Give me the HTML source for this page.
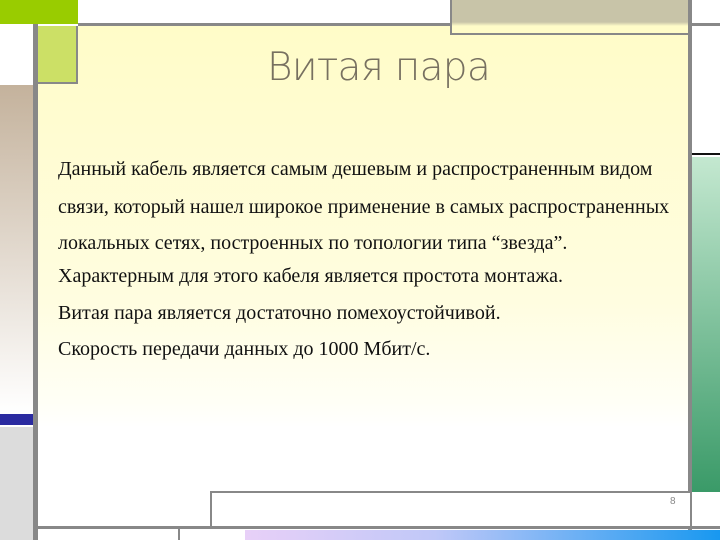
<!DOCTYPE html>
<html><head><meta charset="utf-8"><style>
body{margin:0;width:720px;height:540px;position:relative;overflow:hidden;background:#fff;font-family:"Liberation Serif",serif}
div{position:absolute;box-sizing:border-box}
.t{font-size:20px;color:#111;left:58px;white-space:nowrap}
</style></head><body>
<div style="left:0;top:0;width:78px;height:24px;background:#99cc00"></div>
<div style="left:78px;top:23px;width:642px;height:3px;background:#888"></div>
<div style="left:0;top:27px;width:33px;height:56px;background:#fff"></div>
<div style="left:0;top:85px;width:33px;height:328px;background:linear-gradient(#c4b29c,#fff)"></div>
<div style="left:0;top:414px;width:33px;height:11px;background:#2a2aa0"></div>
<div style="left:0;top:427px;width:33px;height:113px;background:#dcdcdc"></div>
<div style="left:33px;top:24px;width:5px;height:516px;background:#888"></div>
<div style="left:38px;top:26px;width:652px;height:502px;background:linear-gradient(#fffcc8 0%,#fffde0 55%,#fffff6 75%,#fff 80%)"></div>
<div style="left:38px;top:26px;width:40px;height:58px;background:#cce066;border-right:2px solid #888;border-bottom:2px solid #888"></div>
<div style="left:450px;top:0;width:240px;height:35px;background:linear-gradient(#c8c4a8 0,#c8c4a8 22px,#fffcc8 26px);border:2px solid #888;border-top:none"></div>
<div style="left:688px;top:0;width:4px;height:540px;background:#888"></div>
<div style="left:692px;top:27px;width:28px;height:128px;background:#fff;border-bottom:2px solid #111"></div>
<div style="left:692px;top:157px;width:28px;height:335px;background:linear-gradient(#c4e8d0,#3a9a68)"></div>
<div style="left:210px;top:491px;width:480px;height:37px;border:2px solid #888;border-right:none;background:#fff"></div>
<div style="left:670px;top:496px;font-size:10px;color:#888;font-family:'Liberation Sans',sans-serif">8</div>
<div style="left:38px;top:526px;width:682px;height:3px;background:#888"></div>
<div style="left:178px;top:529px;width:2px;height:11px;background:#888"></div>
<div style="left:245px;top:530px;width:475px;height:10px;background:linear-gradient(90deg,#e8d0f8,#c0c8f8 40%,#1898f0)"></div>
<div style="left:267px;top:45px;font-size:39px;color:#777060;font-family:'DejaVu Sans','Liberation Sans',sans-serif;font-weight:200;letter-spacing:-0.7px">Витая пара</div>
<div class="t" style="top:158px">Данный кабель является самым дешевым и распространенным видом</div>
<div class="t" style="top:196px">связи, который нашел широкое применение в самых распространенных</div>
<div class="t" style="top:232px">локальных сетях, построенных по топологии типа “звезда”.</div>
<div class="t" style="top:265px">Характерным для этого кабеля является простота монтажа.</div>
<div class="t" style="top:302px">Витая пара является достаточно помехоустойчивой.</div>
<div class="t" style="top:338px">Скорость передачи данных до 1000 Мбит/с.</div>
</body></html>
